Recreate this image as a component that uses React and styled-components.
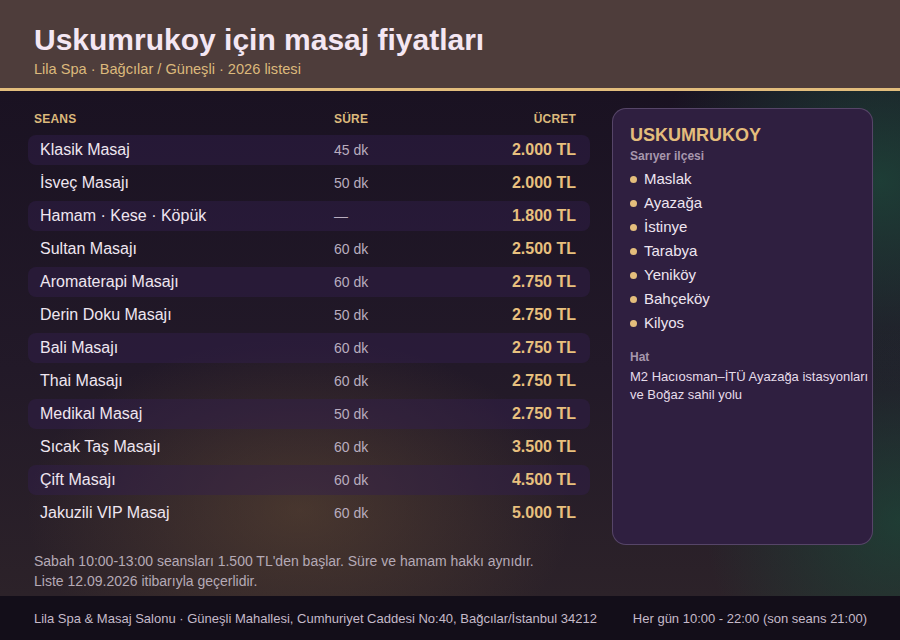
import React from "react";
import styled, { createGlobalStyle } from "styled-components";

const GlobalStyle = createGlobalStyle`
  html, body {
    margin: 0;
    padding: 0;
    background: #130e19;
  }
  body {
    font-family: "Liberation Sans", Arial, sans-serif;
  }
`;

const Page = styled.div`
  width: 900px;
  height: 640px;
  display: flex;
  flex-direction: column;
  overflow: hidden;
`;

const Header = styled.header`
  box-sizing: border-box;
  height: 91px;
  background: #4e3d3b;
  border-bottom: 3px solid #e2bd7d;
  padding: 22px 34px 0;
  h1 {
    margin: 0;
    font-size: 30px;
    font-weight: 700;
    color: #f4e7f3;
    line-height: 36px;
  }
  p {
    margin: 1px 0 0;
    font-size: 14.6px;
    color: #dcb97c;
    line-height: 20px;
  }
`;

const Main = styled.main`
  flex: 1;
  display: flex;
  gap: 22px;
  padding: 17px 27px 0 28px;
  background:
    radial-gradient(ellipse 380px 240px at 300px 420px, rgba(120, 90, 55, 0.4), transparent 72%),
    radial-gradient(ellipse 300px 280px at 880px 90px, rgba(30, 75, 60, 0.75), transparent 75%),
    radial-gradient(ellipse 260px 260px at 900px 430px, rgba(25, 80, 60, 0.6), transparent 75%),
    linear-gradient(180deg, #1a1222 0%, #221928 55%, #2c2229 100%);
`;

const Left = styled.section`
  width: 562px;
  padding-top: 1px;
  display: flex;
  flex-direction: column;
`;

const HeadRow = styled.div`
  display: grid;
  grid-template-columns: 300px 1fr auto;
  padding: 0 14px 0 6px;
  height: 20px;
  align-items: center;
  margin-bottom: 6px;
  font-size: 12px;
  font-weight: 700;
  color: #dcb97c;
  text-transform: uppercase;
  letter-spacing: 0.2px;
`;

const Rows = styled.div`
  display: flex;
  flex-direction: column;
  gap: 3px;
`;

const Row = styled.div`
  display: grid;
  grid-template-columns: 294px 1fr auto;
  align-items: center;
  height: 30px;
  padding: 0 14px 0 12px;
  border-radius: 8px;
  background: ${p => (p.$shaded ? "rgba(50, 30, 78, 0.45)" : "transparent")};
`;

const Name = styled.span`
  font-size: 16px;
  color: #efe6f0;
`;

const Dur = styled.span`
  font-size: 14px;
  color: #b9adbf;
`;

const Price = styled.span`
  font-size: 16px;
  font-weight: 700;
  color: #e8c07e;
  text-align: right;
`;

const Note = styled.p`
  margin: 23px 0 0 6px;
  font-size: 14px;
  line-height: 20px;
  color: #b5aab6;
`;

const Panel = styled.aside`
  width: 261px;
  height: 437px;
  box-sizing: border-box;
  padding: 15px 0 16px 17px;
  border-radius: 14px;
  border: 1px solid rgba(190, 170, 210, 0.28);
  background: #2f1f40;
  h2 {
    margin: 0;
    font-size: 18px;
    font-weight: 700;
    color: #e4bd7c;
    line-height: 22px;
  }
`;

const Label = styled.div`
  font-size: 12px;
  font-weight: 700;
  color: #a797ad;
  line-height: 16px;
  margin-top: ${p => p.$top || 0}px;
`;

const List = styled.ul`
  list-style: none;
  margin: 2px 0 0;
  padding: 0;
  li {
    display: flex;
    align-items: center;
    gap: 7px;
    height: 24px;
    font-size: 15px;
    color: #eee5f0;
  }
  li::before {
    content: "";
    width: 7px;
    height: 7px;
    border-radius: 50%;
    background: #e4bd7c;
    margin-top: 2px;
  }
`;

const Line = styled.p`
  margin: 3px 0 0;
  font-size: 13px;
  line-height: 18px;
  color: #e6dcea;
  white-space: nowrap;
`;

const Footer = styled.footer`
  height: 44px;
  flex-shrink: 0;
  background: #130e19;
  display: flex;
  justify-content: space-between;
  align-items: center;
  padding: 0 33px 0 34px;
  font-size: 13px;
  color: #c5bac9;
`;

const sessions = [
  ["Klasik Masaj", "45 dk", "2.000 TL"],
  ["İsveç Masajı", "50 dk", "2.000 TL"],
  ["Hamam · Kese · Köpük", "—", "1.800 TL"],
  ["Sultan Masajı", "60 dk", "2.500 TL"],
  ["Aromaterapi Masajı", "60 dk", "2.750 TL"],
  ["Derin Doku Masajı", "50 dk", "2.750 TL"],
  ["Bali Masajı", "60 dk", "2.750 TL"],
  ["Thai Masajı", "60 dk", "2.750 TL"],
  ["Medikal Masaj", "50 dk", "2.750 TL"],
  ["Sıcak Taş Masajı", "60 dk", "3.500 TL"],
  ["Çift Masajı", "60 dk", "4.500 TL"],
  ["Jakuzili VIP Masaj", "60 dk", "5.000 TL"],
];

const areas = ["Maslak", "Ayazağa", "İstinye", "Tarabya", "Yeniköy", "Bahçeköy", "Kilyos"];

export default function App() {
  return (
    <Page>
      <GlobalStyle />
      <Header>
        <h1>Uskumrukoy için masaj fiyatları</h1>
        <p>Lila Spa · Bağcılar / Güneşli · 2026 listesi</p>
      </Header>
      <Main>
        <Left>
          <HeadRow>
            <span>Seans</span>
            <span>Süre</span>
            <span>Ücret</span>
          </HeadRow>
          <Rows>
            {sessions.map(([n, d, p], i) => (
              <Row key={n} $shaded={i % 2 === 0}>
                <Name>{n}</Name>
                <Dur>{d}</Dur>
                <Price>{p}</Price>
              </Row>
            ))}
          </Rows>
          <Note>
            Sabah 10:00-13:00 seansları 1.500 TL'den başlar. Süre ve hamam hakkı aynıdır.
            <br />
            Liste 12.09.2026 itibarıyla geçerlidir.
          </Note>
        </Left>
        <Panel>
          <h2>USKUMRUKOY</h2>
          <Label $top={2}>Sarıyer ilçesi</Label>
          <List>
            {areas.map(a => (
              <li key={a}>{a}</li>
            ))}
          </List>
          <Label $top={15}>Hat</Label>
          <Line>
            M2 Hacıosman–İTÜ Ayazağa istasyonları
            <br />
            ve Boğaz sahil yolu
          </Line>
        </Panel>
      </Main>
      <Footer>
        <span>Lila Spa &amp; Masaj Salonu · Güneşli Mahallesi, Cumhuriyet Caddesi No:40, Bağcılar/İstanbul 34212</span>
        <span>Her gün 10:00 - 22:00 (son seans 21:00)</span>
      </Footer>
    </Page>
  );
}
